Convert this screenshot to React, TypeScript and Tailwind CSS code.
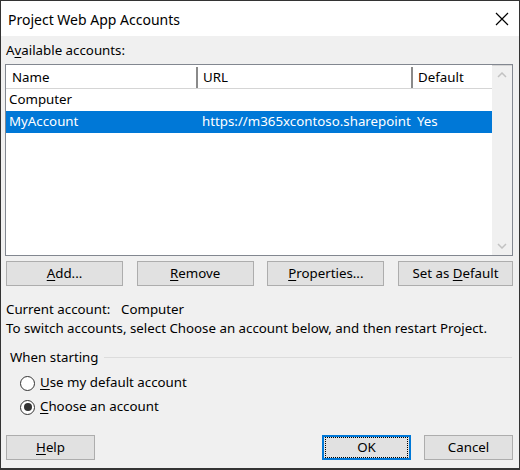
import React from "react";

const font = { fontFamily: '"Noto Sans", "Open Sans", sans-serif' };

function U({ children }: { children: React.ReactNode }) {
  return <span className="underline underline-offset-2">{children}</span>;
}

function Btn({ children, w, primary }: { children: React.ReactNode; w: string; primary?: boolean }) {
  return (
    <div
      className={`${w} h-[25px] flex items-center justify-center bg-[#e1e1e1] text-black whitespace-pre ${
        primary ? "border-2 border-[#0078d7]" : "border border-[#adadad]"
      }`}
    >
      {primary ? (
        <div className="w-full h-full flex items-center justify-center border border-dotted border-black m-[1px]">
          {children}
        </div>
      ) : (
        children
      )}
    </div>
  );
}

function Radio({ checked, children }: { checked?: boolean; children: React.ReactNode }) {
  return (
    <div className="flex items-center h-[24px]">
      <div className="w-[15px] h-[15px] rounded-full border border-[#333] bg-white flex items-center justify-center ml-[15px]">
        {checked && <div className="w-[8px] h-[8px] rounded-full bg-[#333]" />}
      </div>
      <span className="ml-[5px]">{children}</span>
    </div>
  );
}

export default function App() {
  return (
    <div
      className="w-[520px] h-[470px] bg-[#f0f0f0] border border-[#333] border-b-2 flex flex-col text-[13.3px] text-black overflow-hidden"
      style={font}
    >
      <div className="h-[35px] bg-white flex items-center justify-between shrink-0">
        <span className="pl-[7px] text-[14px] pt-[1px]">Project Web App Accounts</span>
        <svg width="14" height="14" viewBox="0 0 14 14" className="mr-[10px]">
          <path d="M1 1 L13 13 M13 1 L1 13" stroke="#000" strokeWidth="1.2" fill="none" />
        </svg>
      </div>

      <div className="pl-[4px] pr-[6px] flex flex-col">
        <div className="h-[28px] flex items-end pb-[3px] pl-[1px]">
          <span>
            A<U>v</U>ailable accounts:
          </span>
        </div>

        <div className="h-[192px] border border-[#828790] bg-white flex">
          <div className="flex-1 flex flex-col">
            <div className="h-[24px] flex border-b border-[#d5d5d5] shrink-0 pt-[2px]">
              <div className="w-[192px] pl-[6px] flex items-center border-r-2 border-[#8a8a8a]">Name</div>
              <div className="w-[215px] pl-[5px] flex items-center border-r-2 border-[#8a8a8a]">URL</div>
              <div className="flex-1 pl-[5px] flex items-center">Default</div>
            </div>
            <div className="h-[22px] flex items-center pl-[3px]">Computer</div>
            <div className="h-[22px] flex items-center bg-[#0078d7] text-white">
              <div className="w-[193px] pl-[3px]">MyAccount</div>
              <div className="w-[216px] pl-[3px] whitespace-nowrap overflow-hidden">
                https://m365xcontoso.sharepoint
              </div>
              <div className="flex-1 pl-[2px]">Yes</div>
            </div>
          </div>
          <div className="w-[20px] bg-[#f0f0f0] flex flex-col items-center justify-between py-[6px] border-t border-[#d5d5d5]">
            <svg width="10" height="6" viewBox="0 0 10 6">
              <path d="M1 5 L5 1 L9 5" stroke="#c2c2c2" strokeWidth="1.5" fill="none" />
            </svg>
            <svg width="10" height="6" viewBox="0 0 10 6">
              <path d="M1 1 L5 5 L9 1" stroke="#c2c2c2" strokeWidth="1.5" fill="none" />
            </svg>
          </div>
        </div>

        <div className="flex justify-between mt-[5px] pl-[1px]">
          <Btn w="w-[117px]">
            <U>A</U>dd...
          </Btn>
          <Btn w="w-[117px]">
            <U>R</U>emove
          </Btn>
          <Btn w="w-[117px]">
            <U>P</U>roperties...
          </Btn>
          <Btn w="w-[115px]">
            {"Set as "}
            <U>D</U>efault
          </Btn>
        </div>

        <div className="mt-[14px] pl-[1px] flex h-[19px] items-center">
          <span className="w-[115px]">Current account:</span>
          <span>Computer</span>
        </div>
        <div className="pl-[1px] h-[19px] flex items-center">
          To switch accounts, select Choose an account below, and then restart Project.
        </div>

        <div className="mt-[10px] flex items-center h-[19px]">
          <span className="pl-[5px] pr-[5px]">When starting</span>
          <div className="flex-1 h-px bg-[#dcdcdc] mr-[1px]" />
        </div>
        <div className="mt-[4px]">
          <Radio>
            <U>U</U>se my default account
          </Radio>
          <Radio checked>
            <U>C</U>hoose an account
          </Radio>
        </div>

        <div className="flex mt-[16px] pl-[1px]">
          <Btn w="w-[89px]">
            <U>H</U>elp
          </Btn>
          <div className="flex-1" />
          <Btn w="w-[89px]" primary>
            OK
          </Btn>
          <div className="w-[13px]" />
          <Btn w="w-[89px]">Cancel</Btn>
        </div>
      </div>
    </div>
  );
}
